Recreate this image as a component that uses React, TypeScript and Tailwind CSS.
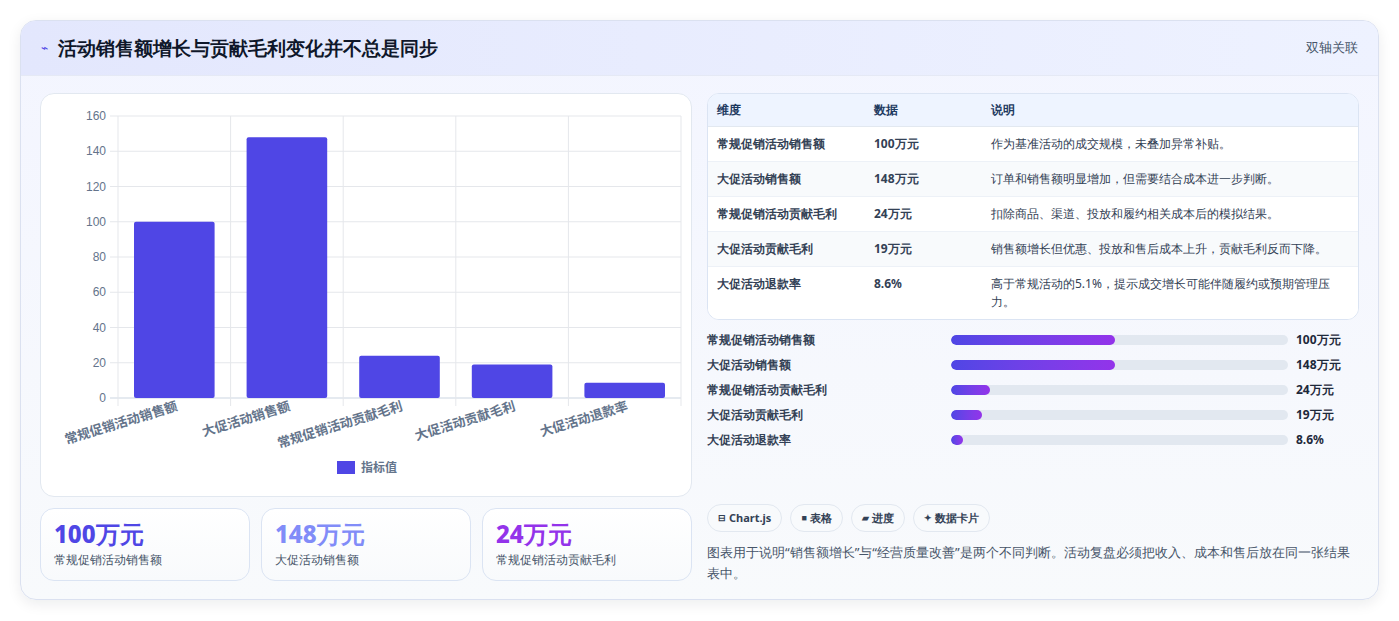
import React from "react";

const cats = ["常规促销活动销售额", "大促活动销售额", "常规促销活动贡献毛利", "大促活动贡献毛利", "大促活动退款率"];
const vals = [100, 148, 24, 19, 8.6];

function Chart() {
  const x0 = 77, x1 = 640, y0 = 22, y1 = 304;
  const cw = (x1 - x0) / 5;
  const sy = (v: number) => y1 - (v / 160) * (y1 - y0);
  return (
    <svg width="650" height="400" style={{ fontFamily: '"Liberation Sans","Noto Sans CJK SC",sans-serif' }}>
      {[0, 20, 40, 60, 80, 100, 120, 140, 160].map((t) => (
        <g key={t}>
          <line x1={x0 - 8} x2={x1} y1={sy(t)} y2={sy(t)} stroke={t === 0 ? "#cbd5e1" : "#e5e7eb"} />
          <text x={65} y={sy(t) + 4} textAnchor="end" fontSize="12" fill="#64748b">{t}</text>
        </g>
      ))}
      {[0, 1, 2, 3, 4, 5].map((i) => (
        <line key={i} x1={x0 + i * cw} x2={x0 + i * cw} y1={y0} y2={y1 + 8} stroke="#e5e7eb" />
      ))}
      {vals.map((v, i) => (
        <rect key={i} x={x0 + i * cw + 16} y={sy(v)} width={cw - 32} height={y1 - sy(v)} fill="#4f46e5" rx="2" />
      ))}
      {cats.map((c, i) => (
        <text key={c} x={x0 + i * cw + cw / 2 + 4} y={316} textAnchor="end" fontSize="13" fontWeight="bold" fill="#64748b" transform={`rotate(-17 ${x0 + i * cw + cw / 2 + 4} 316)`}>{c}</text>
      ))}
      <rect x={296} y={367} width={18} height={13} fill="#4f46e5" />
      <text x={320} y={378} fontSize="12" fill="#64748b" fontWeight="bold">指标值</text>
    </svg>
  );
}

const rows = [
  ["常规促销活动销售额", "100万元", "作为基准活动的成交规模，未叠加异常补贴。"],
  ["大促活动销售额", "148万元", "订单和销售额明显增加，但需要结合成本进一步判断。"],
  ["常规促销活动贡献毛利", "24万元", "扣除商品、渠道、投放和履约相关成本后的模拟结果。"],
  ["大促活动贡献毛利", "19万元", "销售额增长但优惠、投放和售后成本上升，贡献毛利反而下降。"],
  ["大促活动退款率", "8.6%", "高于常规活动的5.1%，提示成交增长可能伴随履约或预期管理压力。"],
];

const bars = [
  ["常规促销活动销售额", "w-[48.6%]", "100万元"],
  ["大促活动销售额", "w-[48.6%]", "148万元"],
  ["常规促销活动贡献毛利", "w-[11.6%]", "24万元"],
  ["大促活动贡献毛利", "w-[9.2%]", "19万元"],
  ["大促活动退款率", "w-[3.6%]", "8.6%"],
];

export default function App() {
  return (
    <div className="w-[1399px] h-[621px] bg-white p-[20px] font-['Liberation_Sans','Noto_Sans_CJK_SC',sans-serif] text-[#1e293b]">
      <div className="h-[580px] rounded-[16px] border border-[#dbe1f0] bg-gradient-to-b from-[#f3f5ff] to-[#f8fafc] shadow-[0_4px_14px_rgba(15,23,42,0.08)] overflow-hidden">
        <div className="h-[55px] flex items-center justify-between px-[20px] bg-gradient-to-r from-[#e3e7fd] to-[#eef2ff] border-b border-[#e5e9f5]">
          <div className="flex items-center gap-[10px]">
            <span className="text-[#4f46e5] text-[12px]">⌁</span>
            <span className="text-[19px] font-bold text-[#0f172a]">活动销售额增长与贡献毛利变化并不总是同步</span>
          </div>
          <span className="text-[12.5px] text-[#475569]">双轴关联</span>
        </div>
        <div className="flex gap-[15px] px-[19px] pt-[17px]">
          <div className="w-[653px] flex flex-col gap-[11px]">
            <div className="h-[404px] bg-white rounded-[14px] border border-[#e2e8f0] overflow-hidden">
              <Chart />
            </div>
            <div className="flex gap-[11px]">
              {[["100万元", "text-[#4f46e5]", "常规促销活动销售额"], ["148万元", "text-[#818cf8]", "大促活动销售额"], ["24万元", "text-[#9333ea]", "常规促销活动贡献毛利"]].map(([v, c, l]) => (
                <div key={l} className="flex-1 h-[73px] rounded-[14px] border border-[#dbe4f3] bg-gradient-to-b from-white to-[#f8fafc] px-[13px] pt-[10px]">
                  <div className={`text-[24px] font-extrabold leading-[30px] ${c}`}>{v}</div>
                  <div className="text-[12px] text-[#475569] mt-[2px]">{l}</div>
                </div>
              ))}
            </div>
          </div>
          <div className="w-[653px] flex flex-col">
            <div className="rounded-[12px] border border-[#dbe4f3] overflow-hidden bg-white text-[12px]">
              <div className="flex h-[33px] items-center bg-[#eef4ff] font-bold text-[#1e3a5f] border-b border-[#e2e8f0]">
                <div className="w-[166px] pl-[9px]">维度</div>
                <div className="w-[117px]">数据</div>
                <div className="flex-1">说明</div>
              </div>
              {rows.map((r, i) => (
                <div key={i} className={`flex py-[8px] leading-[18px] border-b border-[#edf1f7] last:border-b-0 ${i % 2 === 1 ? "bg-[#f8fafc]" : "bg-white"}`}>
                  <div className="w-[166px] pl-[9px] font-bold text-[#334155]">{r[0]}</div>
                  <div className="w-[117px] font-bold text-[#334155]">{r[1]}</div>
                  <div className="flex-1 pr-[24px] text-[#334155]">{r[2]}</div>
                </div>
              ))}
            </div>
            <div className="flex flex-col gap-[8px] mt-[11px] text-[12px] font-bold text-[#334155]">
              {bars.map(([l, w, v]) => (
                <div key={l} className="flex items-center h-[17px]">
                  <div className="w-[244px]">{l}</div>
                  <div className="w-[337px] h-[10px] rounded-full bg-[#e2e8f0] overflow-hidden">
                    <div className={`h-full rounded-full bg-gradient-to-r from-[#4f46e5] to-[#9333ea] ${w}`} />
                  </div>
                  <div className="ml-[8px] text-[#1e293b]">{v}</div>
                </div>
              ))}
            </div>
            <div className="flex gap-[8px] mt-[56px] text-[11px] font-bold text-[#334155]">
              {[["⊟", "Chart.js"], ["■", "表格"], ["▰", "进度"], ["✦", "数据卡片"]].map(([i, t]) => (
                <div key={t} className="h-[28px] px-[10px] rounded-full border border-[#e2e8f0] bg-[#f8fafc] flex items-center gap-[3px]">
                  <span className="text-[9px]">{i}</span>{t}
                </div>
              ))}
            </div>
            <div className="mt-[10px] text-[13px] leading-[21px] text-[#475569]">
              图表用于说明“销售额增长”与“经营质量改善”是两个不同判断。活动复盘必须把收入、成本和售后放在同一张结果表中。
            </div>
          </div>
        </div>
      </div>
    </div>
  );
}
